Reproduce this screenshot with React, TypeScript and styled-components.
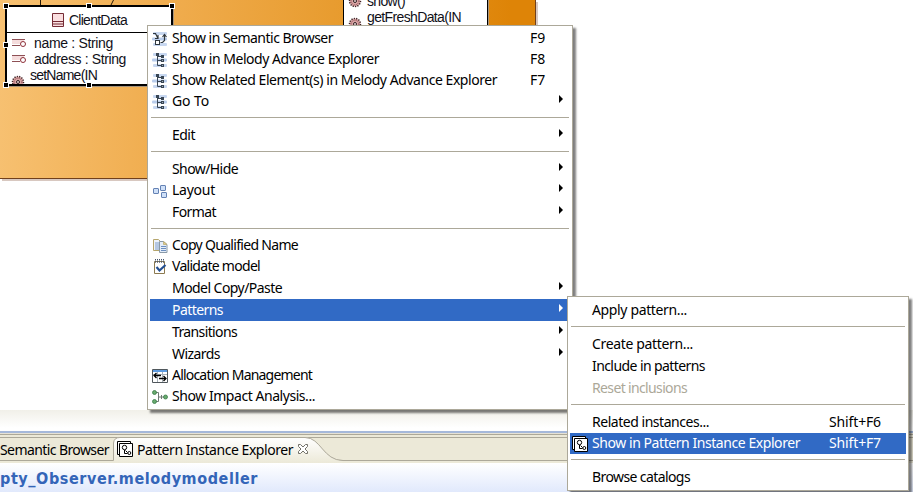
import React, { useLayoutEffect, useRef } from "react";
import styled, { createGlobalStyle } from "styled-components";

const Global = createGlobalStyle`
  * { box-sizing: border-box; }
  body { margin: 0; background: #fff; font-family: "Noto Sans", "Open Sans", sans-serif; font-size: 14px; color: #000; }
`;

/* ---------- text fitted to a given width ---------- */
const Fitted = styled.span`
  display: inline-block;
  white-space: pre;
`;

function Fit({ text, w }: { text: string; w: number }) {
  const ref = useRef<HTMLSpanElement>(null);
  useLayoutEffect(() => {
    const el = ref.current;
    if (!el) return;
    el.style.letterSpacing = "0";
    const natural = el.getBoundingClientRect().width;
    el.style.letterSpacing = `${(w - natural) / text.length}px`;
  }, [text, w]);
  return <Fitted ref={ref}>{text}</Fitted>;
}

/* ---------- page ---------- */
const Page = styled.div`
  position: relative;
  display: flex;
  flex-direction: column;
  width: 913px;
  height: 492px;
  overflow: hidden;
  background: #fff;
`;

const Editor = styled.div`
  height: 410px;
  flex: none;
`;

const Canvas = styled.div`
  position: relative;
  width: 536px;
  height: 179px;
  background: linear-gradient(93deg, #f7c172 0%, #f0ad4f 30%, #e79a2c 65%, #de8407 94%);
  border-right: 1px solid #70401c;
  border-bottom: 1px solid #70401c;
  box-shadow: 2px 2px 0 #d8c8c0;
`;

const Links = styled.svg`
  position: absolute;
  left: 0;
  top: 0;
`;

const ClassNode = styled.div<{ $x: number; $y: number; $w: number; $h: number; $b: number }>`
  position: absolute;
  left: ${(p) => p.$x}px;
  top: ${(p) => p.$y}px;
  width: ${(p) => p.$w}px;
  height: ${(p) => p.$h}px;
  border: ${(p) => p.$b}px solid #000;
  background: #fff;
  box-shadow: 1px 1px 0 #a8957c;
  font-family: "Liberation Sans", Arial, sans-serif;
  color: #101018;
`;

const ClassTitle = styled.div`
  display: flex;
  align-items: center;
  gap: 4px;
  height: 26px;
  padding-left: 44px;
  border-bottom: 1px solid #000;
`;

const Features = styled.div`
  overflow: hidden;
  height: 51px;
  padding-top: 2px;
`;

const Feature = styled.div<{ $gap: number; $pad?: number }>`
  display: flex;
  align-items: center;
  gap: ${(p) => p.$gap}px;
  height: 16px;
  line-height: 16px;
  padding-left: ${(p) => p.$pad ?? 4}px;
  svg { flex: none; }
`;

const GearSlot = styled.span`
  display: block;
  height: 16px;
  padding-top: 8px;
`;

const Handle = styled.i<{ $x: number; $y: number }>`
  position: absolute;
  left: ${(p) => p.$x - 3}px;
  top: ${(p) => p.$y - 3}px;
  width: 6px;
  height: 6px;
  background: #000;
  border: 1px solid #fff;
`;

/* ---------- bottom view ---------- */
const StatusStrip = styled.div`
  height: 21px;
  flex: none;
  background: linear-gradient(#f1f0e9, #fff 85%);
`;

const BlueRule = styled.div`
  height: 3px;
  flex: none;
  background: linear-gradient(#a5b8da 0 66%, #e6e2d4 66%);
`;

const TabBar = styled.div`
  display: flex;
  height: 29px;
  flex: none;
  position: relative;
  background: linear-gradient(#aca899 0 1px, #ece9d8 1px 3px, #aca899 3px 4px, #ece9d8 4px 26px, #aca899 26px 27px, #ece9d8 27px);
`;

const TabShape = styled.svg`
  position: absolute;
  left: 112px;
  top: 3px;
`;

const Tab = styled.div<{ $w: number; $pad: number; $gap?: number }>`
  position: relative;
  display: flex;
  align-items: center;
  width: ${(p) => p.$w}px;
  height: 26px;
  margin-top: 2px;
  padding-left: ${(p) => p.$pad}px;
  gap: ${(p) => p.$gap ?? 0}px;
  svg { flex: none; }
`;

const FormHeader = styled.div`
  height: 29px;
  flex: none;
  padding-top: 5px;
  line-height: 22px;
  font-family: "DejaVu Sans Condensed", "DejaVu Sans", sans-serif;
  font-stretch: condensed;
  font-size: 16px;
  font-weight: 700;
  color: #3465b8;
  background: linear-gradient(#fff, #e1e9fc);
`;

/* ---------- menus ---------- */
const MenuBox = styled.div<{ $x: number; $y: number; $w: number }>`
  position: absolute;
  left: ${(p) => p.$x}px;
  top: ${(p) => p.$y}px;
  width: ${(p) => p.$w}px;
  padding: 2px;
  border: 1px solid #aca899;
  background: #fff;
  box-shadow: 3px 3px 2px rgba(0, 0, 0, 0.5);
`;

const Row = styled.div<{ $h: number; $on?: boolean; $off?: boolean }>`
  position: relative;
  display: flex;
  align-items: center;
  height: ${(p) => p.$h}px;
  line-height: ${(p) => (p.$h === 21 ? 19 : p.$h)}px;
  background: ${(p) => (p.$on ? "#316ac5" : "transparent")};
  color: ${(p) => (p.$on ? "#fff" : p.$off ? "#aca899" : "#000")};
`;

const IconSlot = styled.span`
  display: flex;
  width: 22px;
  padding-left: 2px;
  flex: none;
`;

const Label = styled.span`
  flex: 1;
  height: 100%;
  white-space: nowrap;
`;

const Shortcut = styled.span<{ $w: number }>`
  width: ${(p) => p.$w}px;
  height: 100%;
  flex: none;
`;

const Arrow = styled.i`
  width: 0;
  height: 0;
  margin: 0 7px 5px 0;
  border: 4px solid transparent;
  border-left-color: currentColor;
  border-right-width: 0;
`;

const Separator = styled.div`
  height: 12px;
  padding: 5px 1px 0;
  &::before { content: ""; display: block; height: 1px; background: #aca899; }
`;

/* ---------- icons ---------- */
const I = ({ children }: { children: React.ReactNode }) => (
  <svg width="16" height="16" viewBox="0 0 16 16" fill="none">{children}</svg>
);

const Stripes = () => (
  <g fill="#b9cdec">
    <rect x="1" y="1" width="14" height="3" rx="1" opacity=".8" />
    <rect x="0" y="6.5" width="15" height="3" rx="1" />
    <rect x="1" y="12" width="14" height="3" rx="1" opacity=".8" />
  </g>
);

const TreeIcon = () => (
  <I>
    <Stripes />
    <path d="M5.5 3v10.5H10M5.5 8.5H10M5.5 4.5H9" stroke="#394654" />
    <path d="M4 1h3v3H4zM9 3h3v3H9zM9 7h3v3H9zM9 12h3v3H9z" fill="#394654" />
    <path d="M10 8h1v1h-1zM10 13h1v1h-1z" fill="#9ab" />
  </I>
);

const BrowserIcon = () => (
  <I>
    <Stripes />
    <path d="M1 2.500h2.500L6 7.500M3 7.500h3V4M8.500 11.500h2l2-2V4M10.500 6l2-2.500 2 2.500" stroke="#30383f" strokeWidth="1.200" />
    <rect x="3.500" y="9.500" width="4" height="4" fill="#fff" stroke="#30383f" />
  </I>
);

const LayoutIcon = () => (
  <I>
    <g fill="#cfe0f8" stroke="#6482b4">
      <rect x="1.500" y="5.500" width="5" height="5" rx=".5" />
      <rect x="8.500" y="2.500" width="5" height="5" rx=".5" />
      <rect x="9.500" y="9.500" width="5" height="5" rx=".5" />
    </g>
  </I>
);

const CopyIcon = () => (
  <I>
    <path d="M1.500 1.500h5l3 3v8h-8z" fill="#eef3fb" stroke="#b6a66d" />
    <path d="M3 5h4M3 7h4M3 9h4M3 11h4" stroke="#7c9cc8" />
    <path d="M7.500 3.500h4l3.500 3v8H7.500z" fill="#e4edf9" stroke="#8a9aa8" />
    <path d="M11.500 3.500v3H15z" fill="#e6cf86" stroke="#b6a66d" strokeWidth=".7" />
    <path d="M9 8.500h5M9 10.500h5M9 12.500h5" stroke="#6c8fc0" />
  </I>
);

const ValidateIcon = () => (
  <I>
    <path d="M2.500 2.500h10v12h-10z" fill="#fff" stroke="#8c7a50" />
    <path d="M3.500 0v4M5.500 0v4M7.500 0v4M9.500 0v4M11.500 0v4" stroke="#45546c" strokeDasharray="1.500 .7" />
    <path d="M4.500 8l3 3.500L13.500 6" stroke="#234f91" strokeWidth="2.200" />
  </I>
);

const AllocationIcon = () => (
  <I>
    <path d="M.5 1.500h15v13H.5z" fill="#fff" stroke="#50575c" />
    <path d="M1 2h14v2H1z" fill="#5c9ae0" />
    <path d="M1 6.500h14M5.500 4v10M10.500 4v10" stroke="#a7b0b8" />
    <path d="M2 7.500h7M4.500 5L2 7.500 4.500 10M7 10.500h7M11.500 8l2.500 2.500-2.500 2.500" stroke="#000" strokeWidth="1.300" />
  </I>
);

const ImpactIcon = () => (
  <I>
    <path d="M4 3.500h2.500v9H4M6.500 8H12M9.500 6v4" stroke="#707a74" />
    <g fill="#68aa6d" stroke="#397b48" strokeWidth=".8">
      <circle cx="2.500" cy="3.500" r="2" />
      <circle cx="2.500" cy="12.500" r="2" />
      <circle cx="13.500" cy="8" r="2" />
    </g>
  </I>
);

const PatternIcon = () => (
  <I>
    <path d="M.5.5h13v13H.5z" fill="#fff" stroke="#000" />
    <path d="M2.500 2.500h13v13h-13z" fill="#fff" stroke="#000" />
    <circle cx="7.500" cy="6.500" r="2.200" stroke="#000" />
    <path d="M7.500 9v3.500h3M8.500 9.500l2 2" stroke="#000" />
    <circle cx="12.300" cy="12" r="1.500" stroke="#000" />
  </I>
);

const ClassIcon = () => (
  <svg width="14" height="16" viewBox="0 0 14 16" fill="none">
    <path d="M1.500 1.500h11v13h-11z" fill="#fadfe0" stroke="#752b35" />
    <path d="M2 9.500h10M2 12h10" stroke="#752b35" />
  </svg>
);

const AttributeIcon = () => (
  <svg width="16" height="10" viewBox="0 0 16 10" fill="none">
    <path d="M1 1h12v5H1z" fill="#f5dcdc" />
    <path d="M1 1.500h13M1 7.500h8" stroke="#8e5055" />
    <circle cx="12" cy="6" r="2.500" fill="#fff" stroke="#8e3039" />
  </svg>
);

const GearIcon = () => (
  <svg width="14" height="14" viewBox="0 0 14 14" fill="none">
    <circle cx="7" cy="7" r="5.500" fill="#d9a4a4" stroke="#3c2224" strokeWidth="1.500" strokeDasharray="1.200 1.200" />
    <circle cx="7" cy="7" r="3.800" stroke="#8a4c50" strokeDasharray="1 1" />
    <circle cx="7" cy="7" r="1.500" fill="#f4dede" stroke="#302022" />
  </svg>
);

const CloseIcon = () => (
  <svg width="12" height="12" viewBox="0 0 12 12">
    <path d="M1.500 1.500h2L6 4l2.500-2.500h2v2L8 6l2.500 2.500v2h-2L6 8l-2.500 2.500h-2v-2L4 6 1.500 3.500z" fill="#fff" stroke="#737168" />
  </svg>
);

/* ---------- menu data ---------- */
type Item = {
  text: string; w: number; icon?: React.ReactNode; keys?: string;
  sub?: boolean; on?: boolean; off?: boolean;
} | null;

const mainItems: Item[] = [
  { text: "Show in Semantic Browser", w: 161, icon: <BrowserIcon />, keys: "F9" },
  { text: "Show in Melody Advance Explorer", w: 207, icon: <TreeIcon />, keys: "F8" },
  { text: "Show Related Element(s) in Melody Advance Explorer", w: 325, icon: <TreeIcon />, keys: "F7" },
  { text: "Go To", w: 37, icon: <TreeIcon />, sub: true },
  null,
  { text: "Edit", w: 23, sub: true },
  null,
  { text: "Show/Hide", w: 66, sub: true },
  { text: "Layout", w: 43, icon: <LayoutIcon />, sub: true },
  { text: "Format", w: 44, sub: true },
  null,
  { text: "Copy Qualified Name", w: 126, icon: <CopyIcon /> },
  { text: "Validate model", w: 88, icon: <ValidateIcon /> },
  { text: "Model Copy/Paste", w: 110, sub: true },
  { text: "Patterns", w: 51, sub: true, on: true },
  { text: "Transitions", w: 65, sub: true },
  { text: "Wizards", w: 48, sub: true },
  { text: "Allocation Management", w: 140, icon: <AllocationIcon /> },
  { text: "Show Impact Analysis...", w: 143, icon: <ImpactIcon /> },
];

const patternItems: Item[] = [
  { text: "Apply pattern...", w: 95 },
  null,
  { text: "Create pattern...", w: 101 },
  { text: "Include in patterns", w: 113 },
  { text: "Reset inclusions", w: 95, off: true },
  null,
  { text: "Related instances...", w: 117, keys: "Shift+F6" },
  { text: "Show in Pattern Instance Explorer", w: 208, icon: <PatternIcon />, keys: "Shift+F7", on: true },
  null,
  { text: "Browse catalogs", w: 98 },
];

function Menu({ x, y, w, items, keyCol, keyW }: {
  x: number; y: number; w: number; items: Item[]; keyCol: number; keyW: number;
}) {
  return (
    <MenuBox $x={x} $y={y} $w={w}>
      {items.map((it, i) =>
        it === null ? (
          <Separator key={i} />
        ) : (
          <Row key={i} $h={it.icon ? 21 : 22} $on={it.on} $off={it.off}>
            <IconSlot>{it.icon}</IconSlot>
            <Label><Fit text={it.text} w={it.w} /></Label>
            {it.keys && <Shortcut $w={keyCol}><Fit text={it.keys} w={keyW} /></Shortcut>}
            {it.sub && <Arrow />}
          </Row>
        )
      )}
    </MenuBox>
  );
}

const handles = [[6, 6], [89, 6], [172, 6], [6, 45], [6, 85], [89, 85]];

export default function App() {
  return (
    <>
      <Global />
      <Page>
        <Editor>
          <Canvas>
            <Links width="200" height="8">
              <path d="M40.500 0v6M113.500 0l-3 6" stroke="#241808" fill="none" />
            </Links>
            <ClassNode $x={5} $y={5} $w={168} $h={81} $b={2}>
              <ClassTitle><ClassIcon /><Fit text="ClientData" w={58} /></ClassTitle>
              <Features>
                <Feature $gap={7}><AttributeIcon /><Fit text="name : String" w={79} /></Feature>
                <Feature $gap={7}><AttributeIcon /><Fit text="address : String" w={92} /></Feature>
                <Feature $gap={5}><GearSlot><GearIcon /></GearSlot><Fit text="setName(IN" w={67} /></Feature>
              </Features>
            </ClassNode>
            <ClassNode $x={343} $y={-8} $w={145} $h={60} $b={1}>
              <Feature $gap={5}><GearIcon /><Fit text="show()" w={38} /></Feature>
              <Feature $gap={5}><GearSlot><GearIcon /></GearSlot><Fit text="getFreshData(IN" w={94} /></Feature>
            </ClassNode>
            {handles.map(([x, y]) => <Handle key={`${x}-${y}`} $x={x} $y={y} />)}
          </Canvas>
        </Editor>
        <StatusStrip />
        <BlueRule />
        <TabBar>
          <TabShape width="232" height="26" viewBox="0 0 232 26">
            <defs>
              <linearGradient id="tab" x1="0" y1="0" x2="0" y2="1">
                <stop offset="0" stopColor="#fff" />
                <stop offset="1" stopColor="#ece9d8" />
              </linearGradient>
            </defs>
            <path d="M1.500 26V6Q2 .5 8 .5H193C209 .5 211 23.500 231 23.500V26z" fill="url(#tab)" />
            <path d="M1.500 23.500V6Q2 .5 8 .5H193C209 .5 211 23.500 231 23.500" fill="none" stroke="#aca899" />
          </TabShape>
          <Tab $w={113} $pad={0}><Fit text="Semantic Browser" w={109} /></Tab>
          <Tab $w={230} $pad={4} $gap={4}>
            <PatternIcon /><Fit text="Pattern Instance Explorer" w={156} />
            <CloseIcon />
          </Tab>
        </TabBar>
        <FormHeader><Fit text="pty_Observer.melodymodeller" w={258} /></FormHeader>
        <Menu x={147} y={25} w={426} items={mainItems} keyCol={40} keyW={15} />
        <Menu x={567} y={296} w={342} items={patternItems} keyCol={77} keyW={52} />
      </Page>
    </>
  );
}
